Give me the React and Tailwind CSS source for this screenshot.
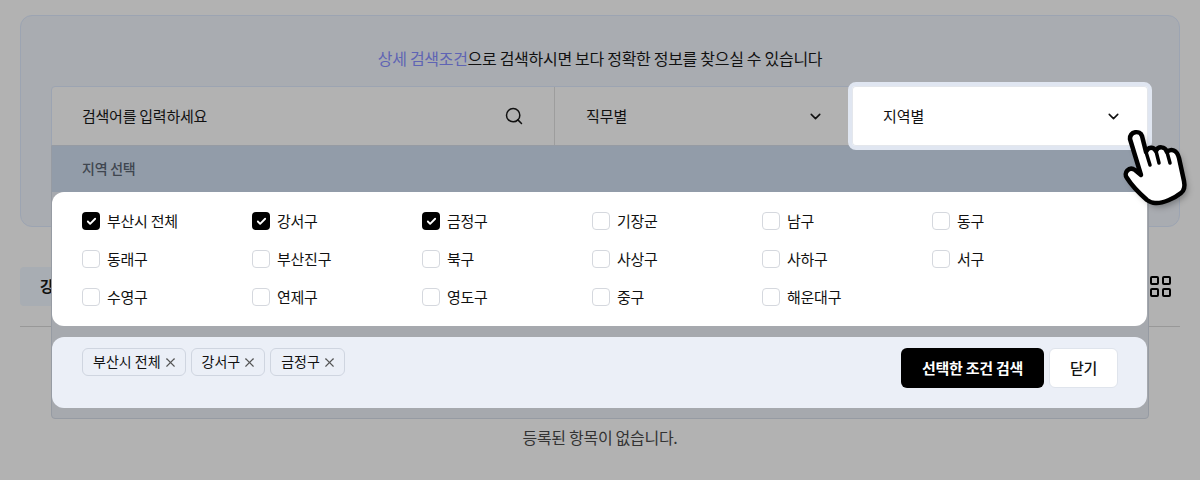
import { Search, ChevronDown, Check, X } from 'lucide-react';

const regions = [
  ['부산시 전체', true], ['강서구', true], ['금정구', true], ['기장군'], ['남구'], ['동구'],
  ['동래구'], ['부산진구'], ['북구'], ['사상구'], ['사하구'], ['서구'],
  ['수영구'], ['연제구'], ['영도구'], ['중구'], ['해운대구'],
];

const tags = ['부산시 전체', '강서구', '금정구'];

const handPath =
  'M1155 203 C1162 204 1175 198 1181 193 C1185 190 1185 186 1184 181 L1179 158 C1177 150 1171 148 1167 152 C1165 146 1158 146 1156 151 C1153 146 1148 147 1146 152 L1142 136 C1140 130 1130 131 1130 139 L1141 175 L1135 170 C1129 166 1123 173 1127 178 C1132 186 1139 193 1147 200 C1150 202 1152 203 1155 203 Z';

function HandCursor() {
  return (
    <svg className="absolute left-[1118px] top-[124px]" width="78" height="92" viewBox="1118 124 78 92">
      <path d={handPath} fill="#000" fillOpacity="0.3" transform="translate(3 4)" style={{ filter: 'blur(3px)' }} />
      <path d={handPath} fill="#fff" stroke="#000" strokeWidth="4.5" strokeLinejoin="round" />
      <path d="M1146 152 L1150 165 M1156 151 L1159 163 M1167 152 L1170 163" fill="none" stroke="#000" strokeWidth="3.5" strokeLinecap="round" />
    </svg>
  );
}

export default function App() {
  return (
    <div className="relative h-[480px] w-[1200px] overflow-hidden bg-[#b2b2b2] pt-[15px] text-[15px] tracking-[-0.25px] text-[#111] font-['Noto_Sans_CJK_KR','Noto_Sans',sans-serif]">
      <section className="mx-5 h-[212px] rounded-xl border border-[#9ca4b2] bg-[#a9acb1] px-[30px] pt-[32px]">
        <p className="h-5 text-center text-base leading-5 tracking-[-0.3px] text-[#111]">
          <span className="text-[#5f64b4]">상세 검색조건</span>으로 검색하시면 보다 정확한 정보를 찾으실 수 있습니다
        </p>
        <div className="mt-[18px] flex h-[60px] rounded-t border border-[#9ca4b2] bg-[#b2b2b2]">
          <div className="flex w-[503px] items-center justify-between border-r border-[#9d9d9d] pl-[30px] pr-[30px]">
            <span>검색어를 입력하세요</span>
            <Search size={20} strokeWidth={1.8} />
          </div>
          <div className="flex w-[295px] items-center justify-between pl-[31px] pr-[26px]">
            <span className="tracking-normal">직무별</span>
            <ChevronDown size={17} strokeWidth={2.2} />
          </div>
        </div>
      </section>

      <div className="mt-10 flex h-[39px] items-center justify-between pl-5 pr-[29px]">
        <div className="flex h-[39px] w-[60px] items-center rounded bg-[#a8adb3] pl-5 font-bold">강</div>
        <div className="grid grid-cols-2 gap-[3px]">
          <span className="h-[9px] w-[9px] rounded-[2px] border-2 border-black" />
          <span className="h-[9px] w-[9px] rounded-[2px] border-2 border-black" />
          <span className="h-[9px] w-[9px] rounded-[2px] border-2 border-black" />
          <span className="h-[9px] w-[9px] rounded-[2px] border-2 border-black" />
        </div>
      </div>
      <div className="mx-5 mt-5 h-px bg-[#989898]" />
      <p className="mt-[100px] text-center text-base leading-5 tracking-[-0.3px] text-[#333]">등록된 항목이 없습니다.</p>

      {/* open dropdown */}
      <div className="absolute left-[51px] top-[145px] h-[274px] w-[1098px] rounded-b border border-[#969ba3] bg-[#a6a9ae]">
        <div className="flex h-[46px] items-center bg-[#929ca9] pb-[2px] pl-[30px] text-sm font-medium text-[#3f4650]">지역 선택</div>
        <div className="mr-px grid h-[134px] grid-cols-[repeat(6,170px)] content-start gap-y-5 rounded-xl bg-white pl-[30px] pt-[20px]">
          {regions.map(([name, checked]) => (
            <label key={name} className="flex h-[18px] items-center gap-[7px] leading-[18px]">
              {checked ? (
                <span className="flex h-[18px] w-[18px] items-center justify-center rounded bg-black">
                  <Check size={11} strokeWidth={4} className="text-white" />
                </span>
              ) : (
                <span className="h-[18px] w-[18px] rounded border border-[#d5d8de] bg-white" />
              )}
              {name}
            </label>
          ))}
        </div>
        <div className="mr-px mt-[11px] flex h-[71px] items-start justify-between rounded-xl bg-[#ebeff7] pl-[30px] pr-[29px] pt-[11px]">
          <div className="flex gap-[5px]">
            {tags.map((tag) => (
              <span key={tag} className="flex h-7 items-center gap-[2px] rounded-md border border-[#cfd5e0] pb-[2px] pl-[10px] pr-[7px] text-sm leading-none tracking-normal">
                {tag}
                <X size={15} strokeWidth={1.8} className="mt-[2px] text-[#555]" />
              </span>
            ))}
          </div>
          <div className="flex gap-[5px]">
            <button className="h-10 w-[143px] rounded-md bg-black font-bold text-white">선택한 조건 검색</button>
            <button className="h-10 w-[69px] rounded-md border border-[#dfe4ec] bg-white font-medium">닫기</button>
          </div>
        </div>
      </div>

      {/* selected select box sits on top of the dropdown */}
      <div className="absolute left-[848px] top-[82px] flex h-[68px] w-[304px] items-center justify-between rounded-lg border-4 border-[#e0e6f1] bg-white pl-[31px] pr-[26px] shadow-[inset_0_0_0_1px_#e4e7ec]">
        <span className="tracking-normal">지역별</span>
        <ChevronDown size={17} strokeWidth={2.2} />
      </div>

      <HandCursor />
    </div>
  );
}
